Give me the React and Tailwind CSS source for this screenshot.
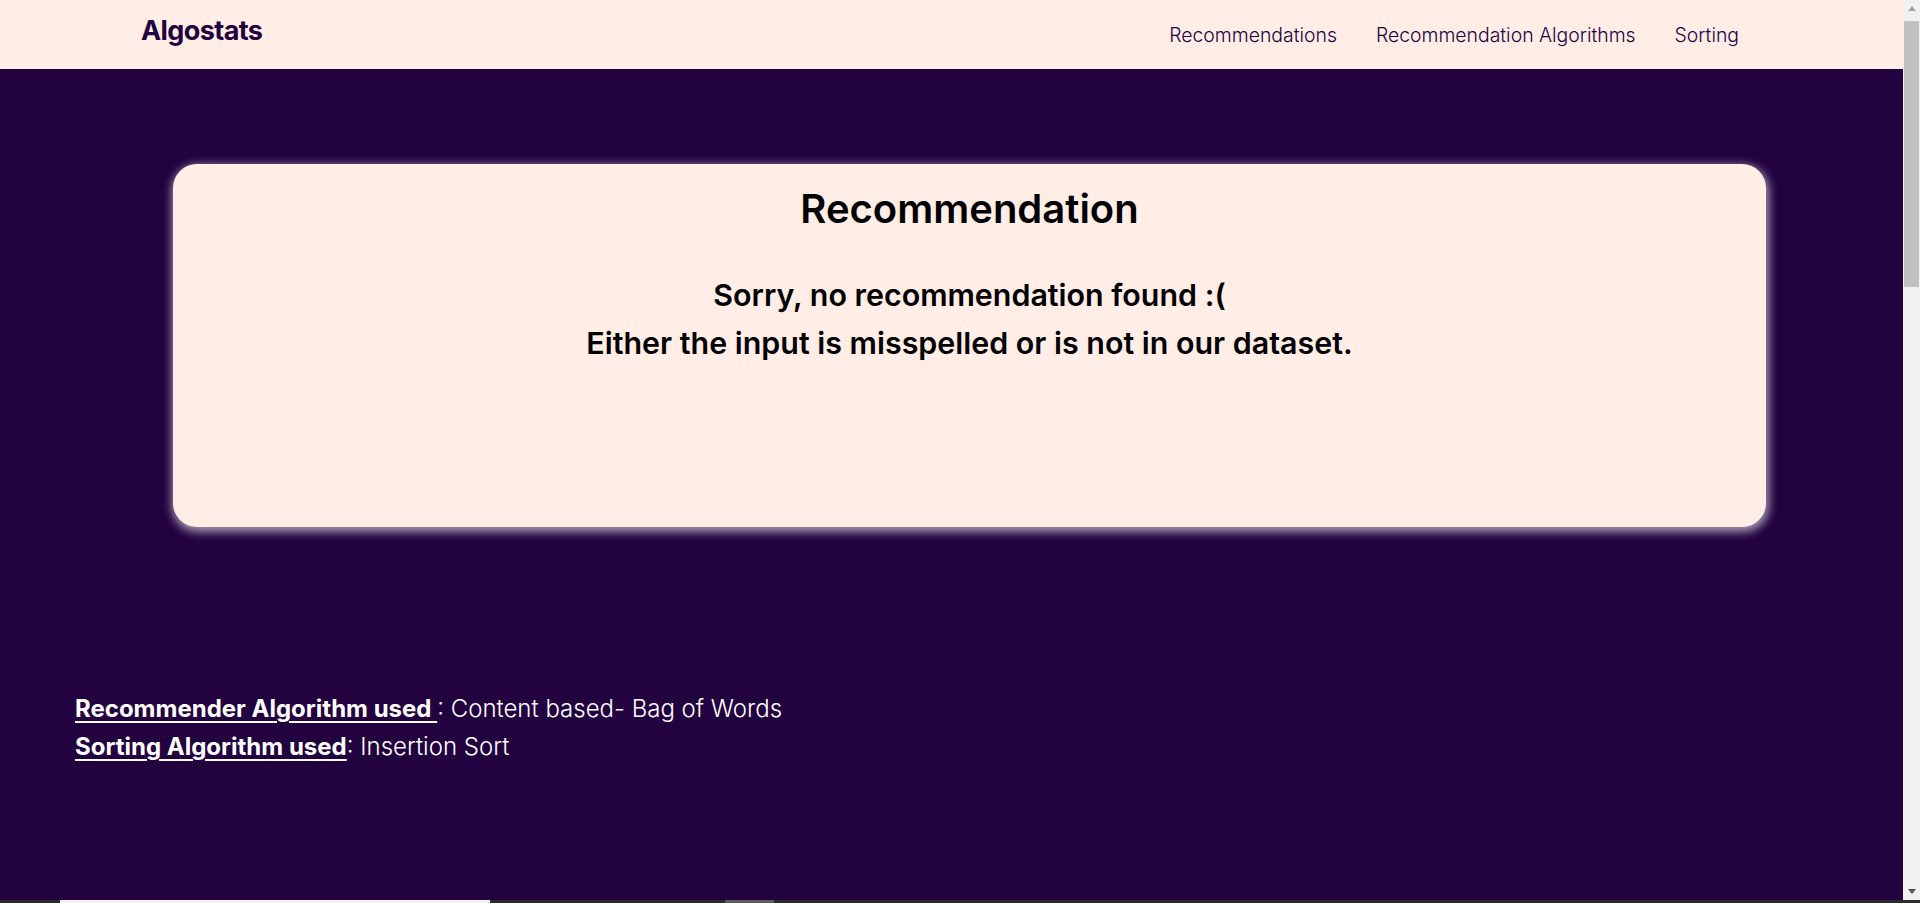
export default function App() {
  return (
    <div className="h-[903px] overflow-hidden flex flex-col bg-[#22033f] font-['Inter','Liberation_Sans',sans-serif]">
      <div className="flex flex-1 min-h-0">
        <main className="flex-1 min-w-0">
          <nav className="h-[69px] bg-[#ffede6] flex items-center justify-between pl-[141px] pr-[164px]">
            <a className="text-[27px] font-bold tracking-[-0.6px] text-[#22033f] -mt-[6px]">Algostats</a>
            <ul className="flex items-center gap-[39px] text-[19.4px] font-light text-[#22033f] mt-[2px]">
              <li>Recommendations</li>
              <li>Recommendation Algorithms</li>
              <li>Sorting</li>
            </ul>
          </nav>

          <div className="pt-[95px]">
            <section className="ml-[173px] mr-[137px] h-[363px] rounded-[24px] bg-[#ffede6] shadow-[1px_3px_10px_2px_rgba(255,255,255,0.6)] pt-[21px] text-center text-black">
              <h1 className="text-[40px] font-semibold leading-[48px]">Recommendation</h1>
              <div className="mt-[38px] text-[30.4px] font-semibold leading-[48px]">
                <p>Sorry, no recommendation found :(</p>
                <p>Either the input is misspelled or is not in our dataset.</p>
              </div>
            </section>
          </div>

          <div className="mt-[163px] pl-[75px] text-[24px] leading-[38px] text-white font-light">
            <p>
              <span className="font-bold underline underline-offset-[4px]">Recommender Algorithm used </span>: Content based- Bag of Words
            </p>
            <p>
              <span className="font-bold underline underline-offset-[4px]">Sorting Algorithm used</span>: Insertion Sort
            </p>
          </div>
        </main>

        {/* browser scrollbar */}
        <aside className="w-[17px] bg-[#f1f1f1] flex flex-col items-center">
          <div className="h-[17px] flex items-center justify-center">
            <div className="w-0 h-0 border-l-[4px] border-r-[4px] border-b-[5px] border-l-transparent border-r-transparent border-b-[#a3a3a3]" />
          </div>
          <div className="w-[15px] h-[266px] mt-[4px] bg-[#c1c1c1]" />
          <div className="flex-1" />
          <div className="h-[17px] flex items-center justify-center">
            <div className="w-0 h-0 border-l-[4px] border-r-[4px] border-t-[5px] border-l-transparent border-r-transparent border-t-[#505050]" />
          </div>
        </aside>
      </div>

      <div className="h-[3px] bg-[#2b2b2b] flex">
        <div className="ml-[60px] w-[430px] bg-[#f2f2f2]" />
        <div className="ml-[235px] w-[49px] bg-[#5a5a5a]" />
      </div>
    </div>
  );
}
